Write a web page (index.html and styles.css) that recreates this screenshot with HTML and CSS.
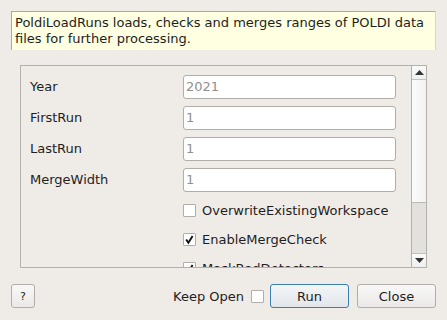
FILE: index.html
```html
<!DOCTYPE html>
<html>
<head>
<meta charset="utf-8">
<link rel="stylesheet" href="styles.css">
</head>
<body>
<div class="dialog">
  <div class="desc">PoldiLoadRuns loads, checks and merges ranges of POLDI data<br>files for further processing.</div>
  <div class="scroll">
    <div class="viewport">
      <div class="form">
        <div class="label">Year</div><div class="input">2021</div>
        <div class="label">FirstRun</div><div class="input">1</div>
        <div class="label">LastRun</div><div class="input">1</div>
        <div class="label">MergeWidth</div><div class="input">1</div>
        <div></div><div class="check"><span class="box"></span>OverwriteExistingWorkspace</div>
        <div></div><div class="check"><span class="box"><svg viewBox="0 0 13 13" width="13" height="13"><path d="M3.2 6.4 L5.4 9.8 L9.6 3" fill="none" stroke="#111" stroke-width="1.9"/></svg></span>EnableMergeCheck</div>
        <div></div><div class="check"><span class="box"><svg viewBox="0 0 13 13" width="13" height="13"><path d="M3.2 6.4 L5.4 9.8 L9.6 3" fill="none" stroke="#111" stroke-width="1.9"/></svg></span>MaskBadDetectors</div>
      </div>
    </div>
    <div class="sbar">
      <div class="arrow"><svg width="9" height="5" viewBox="0 0 9 5"><path d="M0 5 L4.5 0 L9 5Z" fill="#333"/></svg></div>
      <div class="handle"></div>
      <div class="trough"></div>
      <div class="arrow down"><svg width="9" height="5" viewBox="0 0 9 5"><path d="M0 0 L4.5 5 L9 0Z" fill="#333"/></svg></div>
    </div>
  </div>
  <div class="footer">
    <button class="btn help">?</button>
    <div class="spacer"></div>
    <span class="keep">Keep Open</span>
    <span class="box keepbox"></span>
    <button class="btn run">Run</button>
    <button class="btn close">Close</button>
  </div>
</div>
</body>
</html>
```
FILE: styles.css
```css
html, body {
  margin: 0;
  padding: 0;
  background: #efebe7;
}
body {
  font-family: "DejaVu Sans", sans-serif;
  font-size: 13px;
  color: #1e1e1e;
}
.dialog {
  width: 447px;
  height: 320px;
  box-sizing: border-box;
  padding: 11px 11px 0 11px;
  display: flex;
  flex-direction: column;
}
.desc {
  height: 39px;
  box-sizing: border-box;
  background: #ffffe1;
  border-top: 1px solid #a9a9a9;
  border-left: 1px solid #a9a9a9;
  border-right: 1px solid #d4d4d4;
  padding: 3px 2px 0 3px;
  line-height: 16px;
  font-size: 13px;
  white-space: nowrap;
  overflow: hidden;
}
.scroll {
  margin: 15px 9px 0 9px;
  height: 203px;
  box-sizing: border-box;
  border: 1px solid #b4b1ad;
  display: flex;
}
.viewport {
  flex: 1;
  overflow: hidden;
}
.form {
  display: grid;
  grid-template-columns: 153px 213px;
  row-gap: 7px;
  padding: 9px 0 0 9px;
  align-items: center;
}
.label {
  height: 24px;
  line-height: 24px;
}
.input {
  height: 24px;
  box-sizing: border-box;
  border: 1px solid #b1aeaa;
  border-radius: 3px;
  background: #fff;
  color: #909090;
  padding-left: 2px;
  line-height: 22px;
}
.check {
  height: 22px;
  display: flex;
  align-items: center;
}
.box {
  width: 13px;
  height: 13px;
  box-sizing: border-box;
  border: 1px solid #b1aeaa;
  border-radius: 1px;
  background: #fff;
  display: inline-flex;
  margin-right: 6px;
  flex: none;
  position: relative;
}
.box svg {
  position: absolute;
  left: -1px;
  top: -1px;
}
.sbar {
  width: 14px;
  border-left: 1px solid #b4b1ad;
  display: flex;
  flex-direction: column;
}
.arrow {
  height: 14px;
  display: flex;
  align-items: center;
  justify-content: center;
  background: linear-gradient(#fafafa, #efefef);
  border-bottom: 1px solid #c4c1bd;
  box-sizing: border-box;
}
.arrow.down {
  border-bottom: none;
  border-top: 1px solid #c4c1bd;
}
.handle {
  height: 122px;
  background: linear-gradient(90deg, #fbfbfb, #f2f2f2);
  border-bottom: 1px solid #bdbab6;
}
.trough {
  flex: 1;
  background: #e3e1de;
}
.footer {
  display: flex;
  align-items: center;
  height: 24px;
  margin-top: 16px;
}
.spacer { flex: 1; }
.btn {
  height: 24px;
  box-sizing: border-box;
  border: 1px solid #b1aeaa;
  border-radius: 3px;
  background: linear-gradient(#f8f8f7, #ebe9e7);
  font-family: "DejaVu Sans", sans-serif;
  font-size: 13px;
  color: #1e1e1e;
  padding: 0;
}
.help { width: 24px; font-size: 11px; }
.keep { margin-right: 7px; }
.keepbox { margin-right: 6px; }
.run {
  width: 79px;
  border-color: #3b7eb0;
  background: linear-gradient(#f3f5f7, #e2e6ea);
  margin-right: 8px;
}
.close { width: 79px; }
```
